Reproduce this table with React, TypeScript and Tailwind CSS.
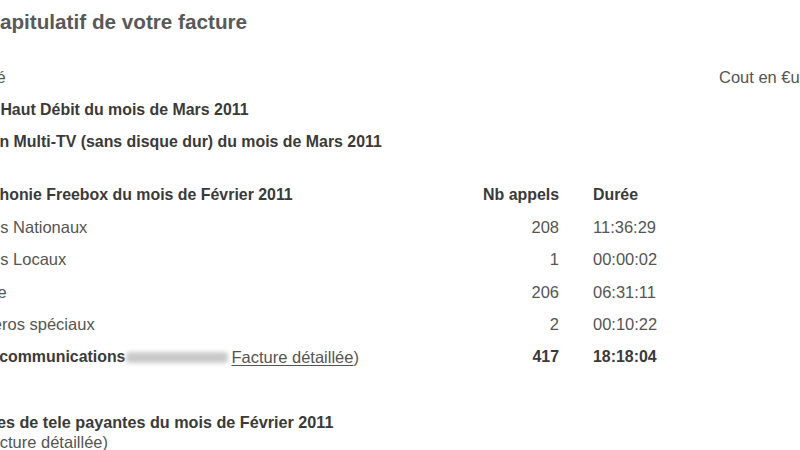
export default function App() {
  return (
    <div className="w-[800px] h-[450px] overflow-hidden bg-white font-['Liberation_Sans',Arial,sans-serif] text-[16.5px] text-[#555]">
      {/* page is cropped on the left: content starts off-screen */}
      <div className="-ml-[42px] w-[900px]">
        {/* Title */}
        <h1 className="ml-[4px] pt-[8px] h-[61px] text-[20.7px] font-bold text-[#595959] leading-[28px]">
          Récapitulatif de votre facture
        </h1>

        {/* Header row */}
        <Row label="Libellé" cout="Cout en €uros" />
        <Row label="Offre Haut Débit du mois de Mars 2011" bold />
        <Row label="Option Multi-TV (sans disque dur) du mois de Mars 2011" bold />

        <div className="h-[20px]" />

        {/* Telephonie */}
        <Row label="Téléphonie Freebox du mois de Février 2011" nb="Nb appels" duree="Durée" bold />
        <Row label="Appels Nationaux" nb="208" duree="11:36:29" />
        <Row label="Appels Locaux" nb="1" duree="00:00:02" />
        <Row label="Mobile" nb="206" duree="06:31:11" />
        <Row label="Numéros spéciaux" nb="2" duree="00:10:22" />
        <div className="flex h-[32.5px] items-center">
          <div className="w-[521px] flex items-center">
            <span className="font-bold text-[15.9px] text-[#3a3a3a]">Total communications</span>
            <span className="ml-[1px] inline-block w-[102px] h-[11px] rounded-sm bg-[#c9c9c9] blur-[2px]" />
            <span className="ml-[3px]">
              <span className="underline underline-offset-2">Facture détaillée</span>)
            </span>
          </div>
          <div className="w-[80px] text-right font-bold text-[15.9px] text-[#3a3a3a]">417</div>
          <div className="pl-[34px] font-bold text-[15.9px] text-[#3a3a3a]">18:18:04</div>
        </div>

        <div className="h-[38px]" />

        {/* Chaines */}
        <div className="font-bold text-[16.2px] text-[#3a3a3a] leading-[20px] -ml-[6px]">
          Chaînes de tele payantes du mois de Février 2011
        </div>
        <div className="leading-[20px] ml-[17px]">
          (<span className="underline underline-offset-2">Facture détaillée</span>)
        </div>
      </div>
    </div>
  );
}

function Row({
  label,
  nb,
  duree,
  cout,
  bold,
}: {
  label: string;
  nb?: string;
  duree?: string;
  cout?: string;
  bold?: boolean;
}) {
  const strong = bold ? "font-bold text-[15.9px] text-[#3a3a3a]" : "";
  return (
    <div className="flex h-[32.5px] items-center">
      <div className={`w-[521px] ${strong}`}>{label}</div>
      <div className={`w-[80px] text-right ${strong}`}>{nb}</div>
      <div className={`w-[160px] pl-[34px] ${strong}`}>{duree}</div>
      <div>{cout}</div>
    </div>
  );
}
